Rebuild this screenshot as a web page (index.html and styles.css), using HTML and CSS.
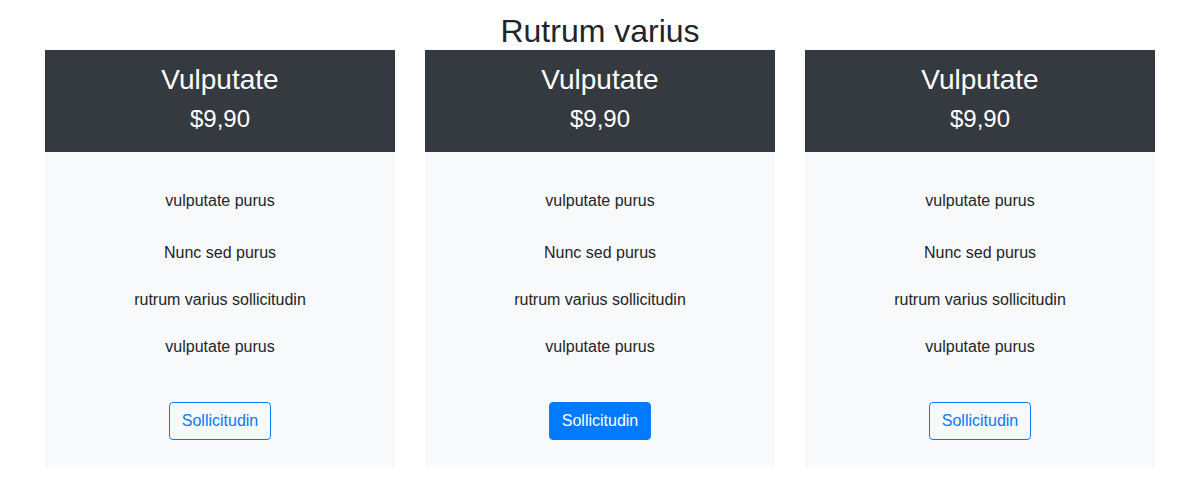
FILE: index.html
```html
<!DOCTYPE html>
<html>
<head>
<meta charset="utf-8">
<link rel="stylesheet" href="styles.css">
</head>
<body>
<div class="page">
  <h2 class="title">Rutrum varius</h2>
  <div class="cards">
    <div class="card">
      <div class="card-head">
        <h3 class="plan">Vulputate</h3>
        <div class="price">$9,90</div>
      </div>
      <div class="card-body">
        <ul class="features">
          <li class="first">vulputate purus</li>
          <li>Nunc sed purus</li>
          <li>rutrum varius sollicitudin</li>
          <li>vulputate purus</li>
        </ul>
        <button class="btn btn-outline">Sollicitudin</button>
      </div>
    </div>
    <div class="card">
      <div class="card-head">
        <h3 class="plan">Vulputate</h3>
        <div class="price">$9,90</div>
      </div>
      <div class="card-body">
        <ul class="features">
          <li class="first">vulputate purus</li>
          <li>Nunc sed purus</li>
          <li>rutrum varius sollicitudin</li>
          <li>vulputate purus</li>
        </ul>
        <button class="btn btn-primary">Sollicitudin</button>
      </div>
    </div>
    <div class="card">
      <div class="card-head">
        <h3 class="plan">Vulputate</h3>
        <div class="price">$9,90</div>
      </div>
      <div class="card-body">
        <ul class="features">
          <li class="first">vulputate purus</li>
          <li>Nunc sed purus</li>
          <li>rutrum varius sollicitudin</li>
          <li>vulputate purus</li>
        </ul>
        <button class="btn btn-outline">Sollicitudin</button>
      </div>
    </div>
  </div>
</div>
</body>
</html>
```

FILE: styles.css
```css
* { box-sizing: border-box; }
html, body {
  margin: 0;
  padding: 0;
  background: #fff;
  font-family: "Liberation Sans", Arial, Helvetica, sans-serif;
  color: #212529;
}
.page {
  width: 1110px;
  margin: 0 auto;
  padding-top: 12px;
}
.title {
  margin: 0;
  font-size: 32px;
  font-weight: 400;
  line-height: 38px;
  text-align: center;
}
.cards {
  display: grid;
  grid-template-columns: repeat(3, 350px);
  gap: 30px;
}
.card {
  display: flex;
  flex-direction: column;
}
.card-head {
  background: #343a40;
  color: #fff;
  text-align: center;
  height: 102px;
  padding-top: 13px;
}
.plan {
  margin: 0 0 7px;
  font-size: 28px;
  font-weight: 400;
  line-height: 34px;
}
.price {
  font-size: 24px;
  line-height: 29px;
}
.card-body {
  background: #f8f9fa;
  height: 315px;
  padding-top: 25px;
  display: flex;
  flex-direction: column;
  align-items: center;
}
.features {
  list-style: none;
  margin: 0;
  padding: 0;
  width: 100%;
  text-align: center;
  font-size: 16px;
  line-height: 24px;
}
.features li {
  padding: 11.5px 0;
}
.features li.first {
  margin-bottom: 5px;
}
.btn {
  margin-top: 32px;
  font-family: inherit;
  font-size: 16px;
  line-height: 24px;
  padding: 6px 12px;
  border-radius: 4px;
  border: 1px solid #007bff;
  cursor: pointer;
}
.btn-outline {
  background: transparent;
  color: #007bff;
}
.btn-primary {
  background: #007bff;
  color: #fff;
}
```
